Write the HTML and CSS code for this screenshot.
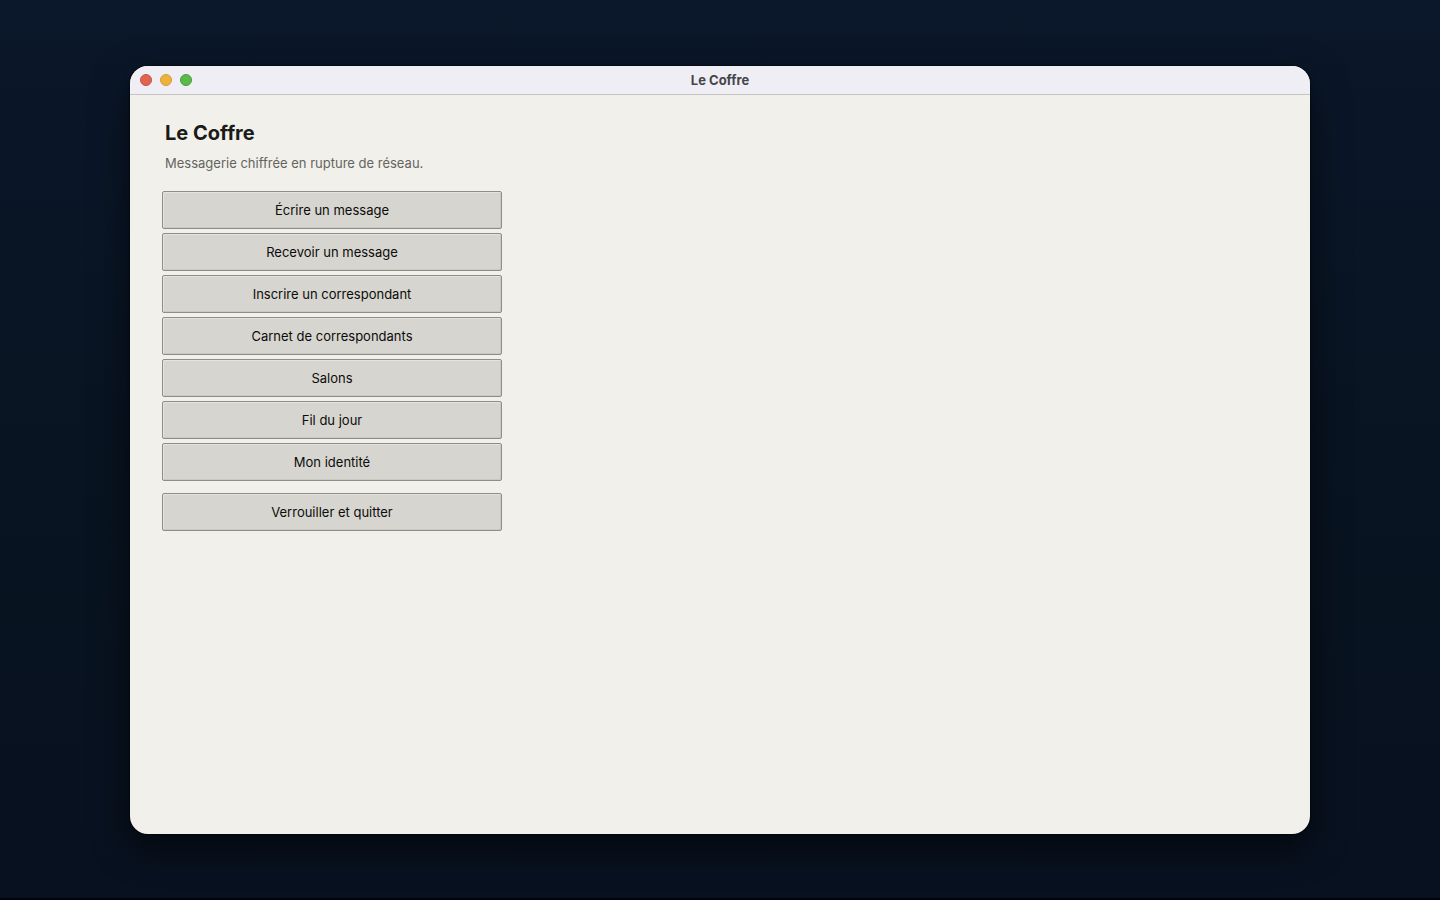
FILE: index.html
```html
<!DOCTYPE html>
<html lang="fr">
<head>
<meta charset="utf-8">
<meta name="viewport" content="width=device-width, initial-scale=1">
<title>Le Coffre</title>
<link rel="stylesheet" href="styles.css">
</head>
<body class="desktop">
<div class="window">
  <header class="titlebar">
    <div class="lights">
      <button class="light light-close" type="button" aria-label="Fermer"></button>
      <button class="light light-minimize" type="button" aria-label="Réduire"></button>
      <button class="light light-zoom" type="button" aria-label="Agrandir"></button>
    </div>
    <span class="titlebar-text">Le Coffre</span>
  </header>
  <main class="content">
    <h1 class="heading">Le Coffre</h1>
    <p class="subtitle">Messagerie chiffrée en rupture de réseau.</p>
    <nav class="menu">
      <button class="menu-button" type="button">Écrire un message</button>
      <button class="menu-button" type="button">Recevoir un message</button>
      <button class="menu-button" type="button">Inscrire un correspondant</button>
      <button class="menu-button" type="button">Carnet de correspondants</button>
      <button class="menu-button" type="button">Salons</button>
      <button class="menu-button" type="button">Fil du jour</button>
      <button class="menu-button" type="button">Mon identité</button>
      <button class="menu-button menu-quit" type="button">Verrouiller et quitter</button>
    </nav>
  </main>
</div>
</body>
</html>
```

FILE: styles.css
```css
* {
  box-sizing: border-box;
}

.desktop {
  display: flex;
  min-height: 100vh;
  margin: 0;
  padding: 66px 130px 64px;
  border-bottom: 2px solid #02030c;
  background: linear-gradient(#0b172a, #081421 50%, #08111f);
  font-family: Inter, "Liberation Sans", sans-serif;
  font-size: 13px;
  line-height: 16px;
}

.window {
  display: flex;
  flex: 1;
  flex-direction: column;
  overflow: hidden;
  border-radius: 18px;
  background: #f1f0eb;
  box-shadow: 0 12px 36px rgba(0, 0, 0, 0.6), 0 0 2px #000;
}

.titlebar {
  display: grid;
  grid-template-columns: 1fr auto 1fr;
  align-items: center;
  height: 29px;
  padding: 0 10px 1px;
  border-bottom: 1px solid #c6c5c4;
  background: #efeef5;
}

.lights {
  display: flex;
  gap: 8px;
}

.light {
  width: 12px;
  height: 12px;
  padding: 0;
  border: 1px solid;
  border-radius: 50%;
}

.light-close {
  border-color: #cb5147;
  background: #e0654f;
}

.light-minimize {
  border-color: #d39b3c;
  background: #edb23a;
}

.light-zoom {
  border-color: #479f38;
  background: #5cb948;
}

.titlebar-text {
  color: #464549;
  font-weight: 700;
}

.content {
  padding: 24px 32px;
}

.heading {
  margin: 0;
  padding-left: 3px;
  color: #1a1a18;
  font-size: 20px;
  font-weight: 700;
  line-height: 28px;
}

.subtitle {
  margin: 8px 0 20px;
  padding-left: 3px;
  color: #646460;
}

.menu {
  display: flex;
  flex-direction: column;
  gap: 4px;
  max-width: 340px;
}

.menu-button {
  height: 38px;
  border: 1px solid #8e8e88;
  border-radius: 2px;
  background: #d6d5cf;
  box-shadow: inset 1px 1px #e4e4de, inset -1px -1px #cac9c2;
  color: #0c0c0a;
  font: inherit;
}

.menu-quit {
  margin-top: 8px;
}
```
